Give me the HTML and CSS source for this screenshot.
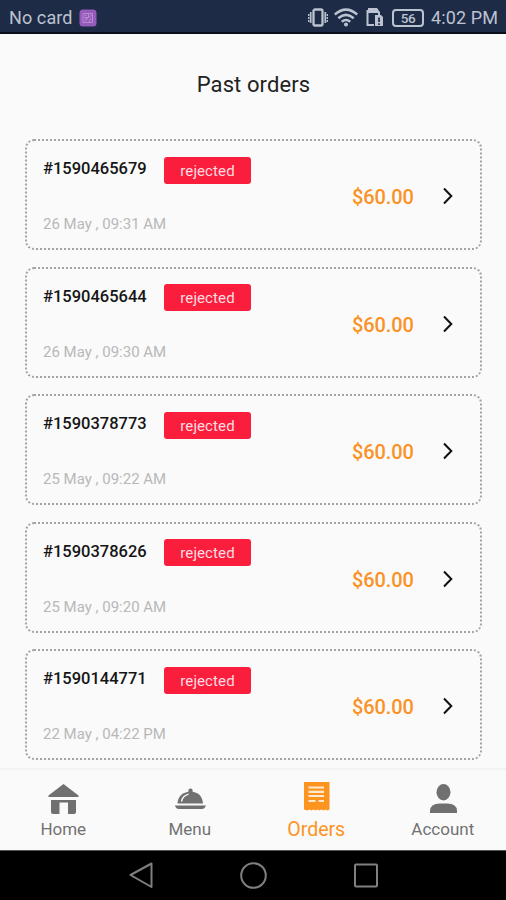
FILE: index.html
```html
<!DOCTYPE html>
<html lang="en">
<head>
<meta charset="utf-8">
<meta name="viewport" content="width=device-width, initial-scale=1">
<title>Past orders</title>
<link rel="stylesheet" href="styles.css">
</head>
<body>
<header class="status">
  <span class="carrier">No card</span>
  <svg class="app-badge" width="18" height="18" viewBox="0 0 18 18"><rect x="0.500" y="0.500" width="17" height="17" rx="3.500" fill="#945bb9"/><path d="M4 4.500h9.500v9H4zM5.500 7l2-1M9.500 5v3.500H5.500l3 1.500-3 2M10 8l3-2M10 13l2-4" fill="none" stroke="#b98ad3" stroke-width="1"/></svg>
  <div class="status-icons">
    <svg width="20" height="20" viewBox="0 0 20 20" fill="none" stroke="#bcc3d0"><rect x="5.500" y="1.500" width="9" height="16" rx="1.500" stroke-width="2.300"/><path d="M2.700 4v11M17.300 4v11" stroke-width="1.700"/><path d="M.7 6v8M19.300 6v8" stroke-width="1.400" stroke-dasharray="2 1"/></svg>
    <svg class="wifi" width="24" height="20" viewBox="0 0 24 20" fill="none" stroke="#bcc3d0" stroke-width="2.600"><path d="M.8 6.500Q12-3.300 23.200 6.500M4.300 10.200q7.700-6.500 15.400 0M7.800 13.700q4.200-3.400 8.400 0"/><circle cx="12" cy="16.500" r="2" fill="#bcc3d0" stroke="none"/></svg>
    <svg class="sim" width="18" height="20" viewBox="0 0 18 20"><path d="M2 1h8.500L13 4.500V8M1.500 2v15H8" fill="none" stroke="#bcc3d0" stroke-width="2"/><path d="M2 0h8l4 5H2z" fill="#bcc3d0"/><path d="M9 7h6l2 2v9H9z" fill="#bcc3d0"/><path d="M13 9.500V14M13 15.200V17" stroke="#1e2b47" stroke-width="1.700"/></svg>
    <span class="battery">56</span>
    <span class="clock">4:02 PM</span>
  </div>
</header>
<main class="page">
  <h1 class="title">Past orders</h1>
  <div class="orders">
    <article class="order">
      <div class="info"><div class="head"><span class="number">#1590465679</span><span class="tag">rejected</span></div><time class="date">26 May , 09:31 AM</time></div>
      <span class="price">$60.00</span><svg class="chevron" width="12" height="18" viewBox="0 0 12 18"><path d="M2 1.500 9.300 9 2 16.500"/></svg>
    </article>
    <article class="order">
      <div class="info"><div class="head"><span class="number">#1590465644</span><span class="tag">rejected</span></div><time class="date">26 May , 09:30 AM</time></div>
      <span class="price">$60.00</span><svg class="chevron" width="12" height="18" viewBox="0 0 12 18"><path d="M2 1.500 9.300 9 2 16.500"/></svg>
    </article>
    <article class="order">
      <div class="info"><div class="head"><span class="number">#1590378773</span><span class="tag">rejected</span></div><time class="date">25 May , 09:22 AM</time></div>
      <span class="price">$60.00</span><svg class="chevron" width="12" height="18" viewBox="0 0 12 18"><path d="M2 1.500 9.300 9 2 16.500"/></svg>
    </article>
    <article class="order">
      <div class="info"><div class="head"><span class="number">#1590378626</span><span class="tag">rejected</span></div><time class="date">25 May , 09:20 AM</time></div>
      <span class="price">$60.00</span><svg class="chevron" width="12" height="18" viewBox="0 0 12 18"><path d="M2 1.500 9.300 9 2 16.500"/></svg>
    </article>
    <article class="order">
      <div class="info"><div class="head"><span class="number">#1590144771</span><span class="tag">rejected</span></div><time class="date">22 May , 04:22 PM</time></div>
      <span class="price">$60.00</span><svg class="chevron" width="12" height="18" viewBox="0 0 12 18"><path d="M2 1.500 9.300 9 2 16.500"/></svg>
    </article>
  </div>
</main>
<nav class="tabs">
  <a class="tab"><svg width="32" height="34" viewBox="0 0 32 34" fill="#707070"><path d="M16.500 2 31.500 13.500V15H1.500v-1.500z"/><path d="M4 18h25v12q0 2-2 2h-6V20.500h-8.500V32H6q-2 0-2-2z"/></svg><span>Home</span></a>
  <a class="tab"><svg width="32" height="34" viewBox="0 0 32 34" fill="#707070"><path d="M3.500 21.500C4 14 8.500 10.500 14.500 9.700a2.200 2.200 0 1 1 4 0c6 .8 10 4.300 10.500 11.800z"/><path d="M7.500 19.500c.8-4 3-6.200 7-7.300" fill="none" stroke="#fafafa" stroke-width="1.300"/><path d="M.8 23.500H32q-1.500 3.500-4 3.500H4.800q-2.500 0-4-3.500z"/></svg><span>Menu</span></a>
  <a class="tab active"><svg width="32" height="34" viewBox="0 0 32 34"><path d="M4 0h25.500v27.500l-2 1-2-1-2 1-2-1-2 1-2-1-2 1-2-1-2 1-2-1-2 1-3.500-1z" fill="#fc941f"/><path d="M8.500 5.500H24M8.500 9.800H24M8.500 14H24M8.500 19h7M18.500 19h5.500" stroke="#ffe9cf" stroke-width="2.200"/></svg><span>Orders</span></a>
  <a class="tab"><svg width="32" height="34" viewBox="0 0 32 34" fill="#707070"><ellipse cx="16.500" cy="10.200" rx="7" ry="8.200"/><path d="M3 31v-2q0-7.500 10-7.500h7q10 0 10 7.500v2z"/></svg><span>Account</span></a>
</nav>
<footer class="system">
  <svg width="26" height="28" viewBox="0 0 26 28"><path d="M24.500 1.500v23.500L3.500 13z"/></svg>
  <svg width="28" height="28" viewBox="0 0 28 28"><circle cx="14.500" cy="13.500" r="12.300"/></svg>
  <svg width="26" height="28" viewBox="0 0 26 28"><rect x="2" y="2.500" width="22" height="22" rx="1"/></svg>
</footer>
</body>
</html>
```
FILE: styles.css
```css
* { box-sizing: border-box; }
body { margin: 0; width: 506px; height: 900px; display: flex; flex-direction: column; overflow: hidden; background: #fafafa; color: #222; font-family: Roboto, sans-serif; }
svg { display: block; flex: none; }
.status { height: 34px; flex: none; display: flex; align-items: center; background: #1e2b47; border-bottom: 2px solid #090e19; padding: 3px 8px 0 9px; color: #bcc3d0; font-size: 18px; line-height: 31px; }
.carrier { letter-spacing: 0.1px; width: 70px; white-space: nowrap; }
.status-icons { display: flex; align-items: center; margin-left: auto; }
.wifi { margin-left: 6px; }
.sim { margin-left: 8px; }
.battery { width: 32px; height: 18px; margin: 0 7px 0 8px; border: 2px solid #bcc3d0; border-radius: 4px; text-align: center; font-size: 13.5px; font-weight: 500; line-height: 15px; letter-spacing: -0.3px; }
.clock { width: 67px; white-space: nowrap; letter-spacing: 0.1px; }
.page { flex: 1; min-height: 0; padding: 0 24px 0 25px; }
.title { margin: 0; height: 105px; line-height: 101px; text-align: center; font-size: 22px; font-weight: 400; letter-spacing: 0.1px; }
.orders { display: flex; flex-direction: column; gap: 16.5px; }
.order { height: 111px; display: flex; align-items: center; border: 2px dotted #a3a3a3; border-radius: 9px; padding: 0 26px 0 16px; }
.info { flex: 1; align-self: stretch; padding-top: 15px; }
.head { display: flex; height: 28px; align-items: center; }
.number { width: 121px; height: 28px; line-height: 26px; font-size: 16.5px; font-weight: 500; color: #151515; letter-spacing: 0; }
.tag { width: 87px; height: 27px; border-radius: 3px; background: #fa1e3c; color: #ffdce0; font-size: 15px; line-height: 28px; text-align: center; letter-spacing: 0.1px; }
.date { display: block; margin-top: 30px; font-size: 15px; line-height: 20px; color: #b8b8b8; letter-spacing: 0; }
.price { width: 90px; margin-top: 5px; color: #fa9226; font-size: 20px; font-weight: 500; line-height: 24px; letter-spacing: -0.1px; }
.chevron { fill: none; stroke: #111; stroke-width: 2; margin-top: 3px; }
.tabs { height: 82px; flex: none; display: grid; grid-template-columns: repeat(4, 1fr); border-top: 2px solid #f2f2f2; }
.tab { display: flex; flex-direction: column; align-items: center; padding-top: 12px; color: #727272; font-size: 17px; line-height: 27px; letter-spacing: 0; }
.active { color: #fc941f; font-size: 19.5px; }
.system { height: 50px; flex: none; background: #000; border-top: 1px solid #555; display: flex; justify-content: center; align-items: center; gap: 86px; }
.system svg { fill: none; stroke: #808080; stroke-width: 2; stroke-linejoin: round; }
```
